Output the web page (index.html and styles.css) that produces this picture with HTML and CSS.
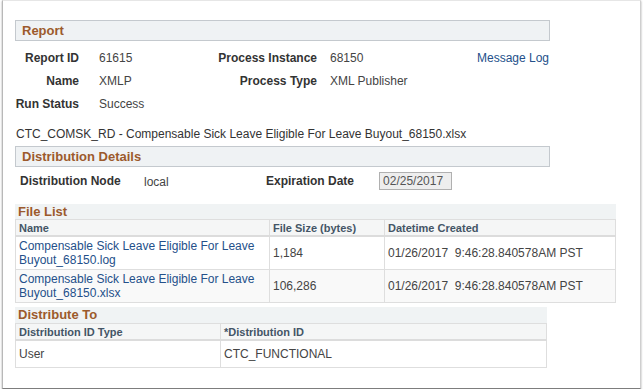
FILE: index.html
```html
<!DOCTYPE html>
<html lang="en">
<head>
    <meta charset="UTF-8">
    <meta name="viewport" content="width=device-width, initial-scale=1.0">
    <title>Report Detail</title>
    <link rel="stylesheet" href="styles.css">
</head>
<body>
    <div class="window">
        <div class="group-head report-head">Report</div>
        <div class="report-grid">
            <span class="lbl">Report ID</span>
            <span class="val">61615</span>
            <span class="lbl">Process Instance</span>
            <span class="val val2">68150</span>
            <a class="link" href="#">Message Log</a>

            <span class="lbl">Name</span>
            <span class="val">XMLP</span>
            <span class="lbl">Process Type</span>
            <span class="val val2">XML Publisher</span>
            <span></span>

            <span class="lbl">Run Status</span>
            <span class="val">Success</span>
            <span></span>
            <span></span>
            <span></span>
        </div>

        <p class="file-title">CTC_COMSK_RD - Compensable Sick Leave Eligible For Leave Buyout_68150.xlsx</p>

        <div class="group-head dist-head">Distribution Details</div>
        <div class="dist-row">
            <span class="lbl node-lbl">Distribution Node</span>
            <span class="val node-val">local</span>
            <span class="lbl">Expiration Date</span>
            <span class="date-box">02/25/2017</span>
        </div>

        <div class="grid-head filelist-head">File List</div>
        <table class="grid filelist">
            <tr>
                <th class="c-name">Name</th>
                <th class="c-size">File Size (bytes)</th>
                <th>Datetime Created</th>
            </tr>
            <tr>
                <td><a class="link" href="#">Compensable Sick Leave Eligible For Leave Buyout_68150.log</a></td>
                <td>1,184</td>
                <td>01/26/2017&nbsp; 9:46:28.840578AM PST</td>
            </tr>
            <tr class="alt">
                <td><a class="link" href="#">Compensable Sick Leave Eligible For Leave Buyout_68150.xlsx</a></td>
                <td>106,286</td>
                <td>01/26/2017&nbsp; 9:46:28.840578AM PST</td>
            </tr>
        </table>

        <div class="grid-head distto-head">Distribute To</div>
        <table class="grid distto">
            <tr>
                <th class="c-type">Distribution ID Type</th>
                <th>*Distribution ID</th>
            </tr>
            <tr>
                <td>User</td>
                <td>CTC_FUNCTIONAL</td>
            </tr>
        </table>
    </div>
</body>
</html>
```

FILE: styles.css
```css
body{
    margin: 0;
    background: #ffffff;
    font-family: "Liberation Sans", Arial, sans-serif;
    font-size: 12px;
    color: #333;
}
.window{
    box-sizing: border-box;
    margin-left: 2px;
    width: 639px;
    height: 389px;
    padding: 19px 0 0 12px;
    border-top: 1px solid #e6e6e6;
    border-left: 1px solid #b8b8b8;
    border-right: 1px solid #cfcfcf;
    border-bottom: 1px solid #7d7d7d;
    box-shadow: 0 1px 2px rgba(0, 0, 0, 0.35);
}
.group-head{
    box-sizing: border-box;
    width: 535px;
    height: 21px;
    padding-left: 6px;
    line-height: 19px;
    background: #eff2f4;
    border: 1px solid #c4c9ce;
    color: #9c5a2c;
    font-size: 13px;
    font-weight: bold;
}
.report-grid{
    display: grid;
    grid-template-columns: 64px 118px 120px 160px 73px;
    grid-auto-rows: 23px;
    align-items: center;
    margin-top: 5px;
}
.lbl{
    font-weight: bold;
    color: #333;
    text-align: right;
}
.val{
    color: #444;
    padding-left: 20px;
}
.val2{
    padding-left: 13px;
}
.link{
    color: #24508a;
    text-decoration: none;
}
.file-title{
    margin: 12px 0 0 1px;
    line-height: 15px;
    color: #333;
}
.dist-head{
    margin-top: 4px;
}
.dist-row{
    display: flex;
    align-items: center;
    height: 18px;
    margin-top: 5px;
    padding-left: 5px;
}
.node-lbl{
    width: 124px;
    text-align: left;
}
.node-val{
    width: 122px;
    padding: 2px 0 0 0;
}
.date-box{
    box-sizing: border-box;
    width: 73px;
    height: 18px;
    margin-left: 25px;
    padding: 0 0 0 3px;
    line-height: 16px;
    background: #eeeeee;
    border: 1px solid #b0b0b0;
    color: #555;
}
.grid-head{
    box-sizing: border-box;
    height: 15px;
    padding-left: 3px;
    line-height: 15px;
    background: #f0f3f4;
    color: #9c5a2c;
    font-size: 13px;
    font-weight: bold;
}
.filelist-head{
    width: 601px;
    margin-top: 14px;
}
.distto-head{
    width: 532px;
    margin-top: 4px;
    height: 16px;
    line-height: 16px;
}
.grid{
    border-collapse: collapse;
    table-layout: fixed;
}
.grid th{
    height: 15px;
    padding: 0 3px;
    text-align: left;
    font-size: 11px;
    font-weight: bold;
    color: #445566;
    background: #f5f6f6;
    border: 1px solid #dedede;
    border-bottom: 2px solid #dcdcdc;
}
.grid td{
    padding: 0 3px;
    line-height: 14px;
    color: #444;
    border: 1px solid #dedede;
    vertical-align: middle;
}
.filelist{
    width: 601px;
}
.filelist td{
    height: 32px;
}
.filelist .alt td{
    background: #f9f9f9;
}
.c-name{
    width: 247px;
}
.c-size{
    width: 108px;
}
.distto{
    width: 532px;
}
.distto td{
    height: 26px;
}
.c-type{
    width: 198px;
}
```
